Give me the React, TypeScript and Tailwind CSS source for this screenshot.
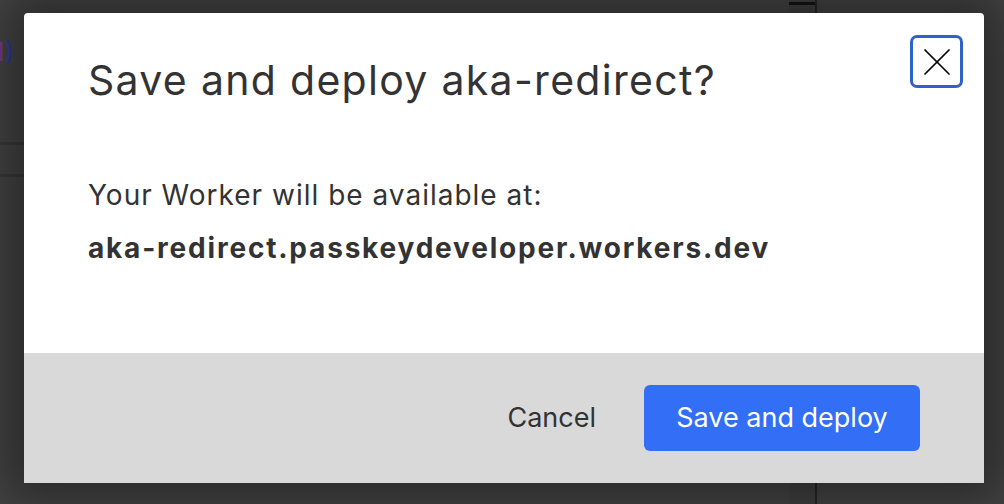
export default function App() {
  return (
    <div className="relative w-[1004px] h-[504px] overflow-hidden bg-[#454545] font-['Inter',sans-serif]">
      {/* Editor behind the overlay */}
      <div className="flex h-full">
        <div className="w-[789px] h-full flex flex-col">
          <div className="h-[38px]" />
          <div className="h-[28px] -ml-[6px] font-['DejaVu Sans Mono',monospace] text-[26px] leading-[28px]">
            <span className="text-[#7a3c90]">1</span>
            <span className="text-[#2b3ab0]">)</span>
          </div>
          <div className="h-[76px]" />
          <div className="h-[3px] bg-[#3a3a3a]" />
          <div className="h-[29px]" />
          <div className="h-[3px] bg-[#3a3a3a]" />
        </div>
        <div className="w-[28px] h-full bg-[#414141] border-r-2 border-[#262626] pt-[2px]">
          <div className="h-[3px] bg-[#151515]" />
        </div>
        <div className="flex-1" />
      </div>

      {/* Dialog */}
      <div className="absolute left-[24px] top-[13px] w-[960px] h-[470px] flex flex-col bg-white rounded-tr-[4px] rounded-tl-[4px] shadow-[0_0_50px_20px_rgba(0,0,0,0.4)]">
        <button className="absolute right-[21px] top-[22px] w-[53px] h-[53px] flex items-center justify-center rounded-[7px] border-[3px] border-[#2c62c9] bg-white">
          <svg width="26" height="26" viewBox="0 0 26 26" fill="none" stroke="#000" strokeWidth="1.7" strokeLinecap="round">
            <path d="M1 1L25 25" />
            <path d="M25 1L1 25" />
          </svg>
        </button>

        <div className="flex-1 pl-[64px] pt-[43px]">
          <h1 className="text-[41px] leading-[48px] text-[#333333] font-normal tracking-[1.3px]">
            Save and deploy aka-redirect?
          </h1>
          <p className="mt-[75px] text-[28px] leading-[32px] text-[#333333] tracking-[1px]">
            Your Worker will be available at:
          </p>
          <p className="mt-[21px] text-[28px] leading-[32px] text-[#333333] font-bold tracking-[1.8px]">
            aka-redirect.passkeydeveloper.workers.dev
          </p>
        </div>

        <div className="h-[130px] bg-[#d9d9d9] flex items-center justify-end gap-[48px] pr-[64px]">
          <button className="text-[27px] leading-[32px] text-[#333333]">Cancel</button>
          <button className="w-[276px] h-[66px] rounded-[6px] bg-[#326ef6] text-white text-[27px] leading-[32px]">
            Save and deploy
          </button>
        </div>
      </div>
    </div>
  );
}
